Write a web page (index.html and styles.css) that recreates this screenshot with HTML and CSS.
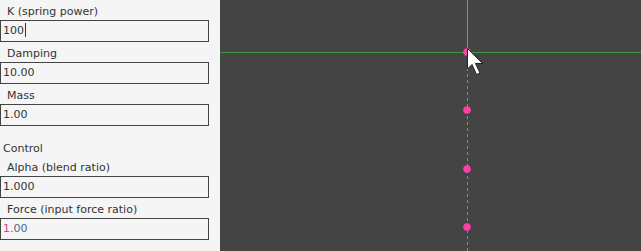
FILE: index.html
```html
<!DOCTYPE html>
<html lang="en">
<head>
    <meta charset="UTF-8">
    <title>Spring</title>
    <link rel="stylesheet" href="styles.css">
</head>
<body>
    <div class="app">
        <div class="panel">
            <div class="label">K (spring power)</div>
            <div class="field">100<span class="caret"></span></div>
            <div class="label">Damping</div>
            <div class="field">10.00</div>
            <div class="label">Mass</div>
            <div class="field">1.00</div>

            <div class="section">Control</div>
            <div class="label">Alpha (blend ratio)</div>
            <div class="field">1.000</div>
            <div class="label">Force (input force ratio)</div>
            <div class="field field-soft"><span class="hl">1</span>.00</div>
        </div>

        <div class="canvas">
            <svg width="421" height="251" viewBox="0 0 421 251">
                <!-- target line -->
                <line x1="0" y1="52.5" x2="421" y2="52.5" stroke="#3f9a3f" stroke-width="1"/>
                <line x1="247.5" y1="0" x2="247.5" y2="52" stroke="#8a8a8a" stroke-width="1"/>
                <!-- spring trail -->
                <line x1="247.5" y1="56" x2="247.5" y2="251" stroke="#ff4aa8" stroke-width="1" stroke-dasharray="3 3"/>
                <circle cx="247" cy="52" r="3.8" fill="#ff3fa6"/>
                <circle cx="247" cy="110" r="3.8" fill="#ff3fa6"/>
                <circle cx="247" cy="169" r="3.8" fill="#ff3fa6"/>
                <circle cx="247" cy="227" r="3.8" fill="#ff3fa6"/>
                <!-- mouse pointer -->
                <polygon points="247.5,48.5 247.5,69 252,64.5 256.5,74.5 260,73 255.5,63.5 262.5,63.5" fill="#fff" stroke="#222" stroke-width="1" stroke-linejoin="miter"/>
            </svg>
        </div>
    </div>
</body>
</html>
```

FILE: styles.css
```css
html, body { margin: 0; padding: 0; }
body { font-family: "DejaVu Sans", Tahoma, sans-serif; font-size: 11px; color: #333; background: #f5f5f5; }

.app { display: flex; width: 641px; height: 251px; overflow: hidden; }

/* left settings panel */
.panel { width: 220px; flex: none; background: #f5f5f5; }
.label { padding: 5px 0 1px 7px; line-height: 14px; height: 14px; white-space: nowrap; }
.section { padding: 16px 0 0 3px; line-height: 14px; height: 14px; }

.field {
    box-sizing: border-box;
    width: 209px;
    height: 22px;
    border: 1px solid #444;
    padding-left: 2px;
    line-height: 20px;
    color: #333;
    background: #f5f5f5;
}
.field-soft { color: #4a6a8c; }
.hl { color: #e0409a; }
.caret { display: inline-block; width: 1px; height: 14px; background: #333; vertical-align: -3px; margin-left: 1px; }

/* drawing area */
.canvas { flex: 1; background: #444; position: relative; }
.canvas svg { display: block; }
```
